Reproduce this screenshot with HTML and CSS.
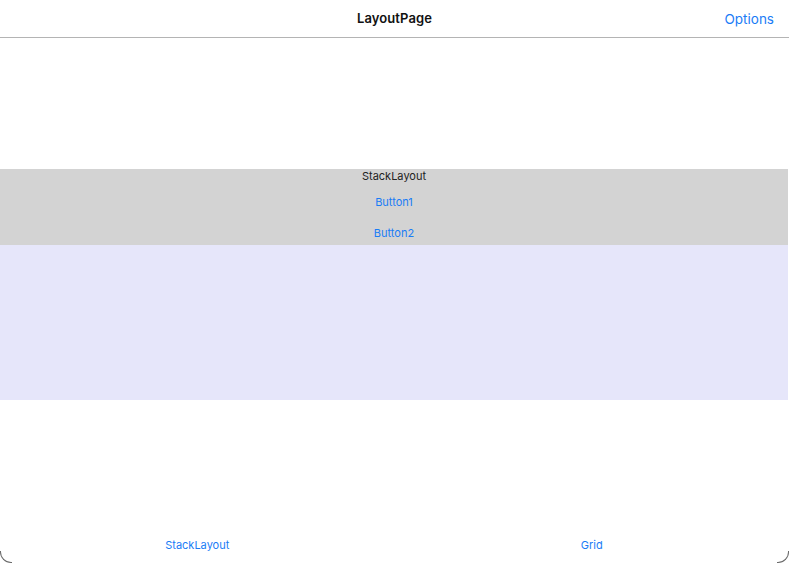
FILE: index.html
```html
<!DOCTYPE html>
<html>
<head>
<meta charset="utf-8">
<link rel="stylesheet" href="styles.css">
</head>
<body>
<div class="app">
  <header class="navbar">
    <div class="nav-title">LayoutPage</div>
    <div class="nav-action">Options</div>
  </header>
  <main class="content">
    <div class="spacer-top"></div>
    <section class="stack">
      <div class="stack-label">StackLayout</div>
      <div class="stack-btn">Button1</div>
      <div class="stack-btn">Button2</div>
    </section>
    <section class="lavender"></section>
  </main>
  <nav class="tabbar">
    <div class="tab">StackLayout</div>
    <div class="tab">Grid</div>
  </nav>
  <div class="corner corner-left"></div>
  <div class="corner corner-right"></div>
</div>
</body>
</html>
```

FILE: styles.css
```css
html, body {
  margin: 0;
  padding: 0;
  background: #ffffff;
}
body {
  font-family: Inter, "Liberation Sans", Arial, sans-serif;
}
.app {
  position: relative;
  width: 789px;
  height: 563px;
  display: flex;
  flex-direction: column;
  overflow: hidden;
}
.navbar {
  height: 37px;
  border-bottom: 1px solid #b4b4b4;
  display: flex;
  align-items: center;
  justify-content: center;
  position: relative;
  flex: none;
}
.nav-title {
  font-size: 13px;
  font-weight: 600;
  color: #111;
  letter-spacing: 0.1px;
  margin-top: -2px;
}
.nav-action {
  position: absolute;
  right: 15px;
  top: 0;
  height: 37px;
  display: flex;
  align-items: center;
  font-size: 13.5px;
  color: #1a7cf6;
}
.content {
  flex: 1;
  display: flex;
  flex-direction: column;
}
.spacer-top {
  height: 131px;
}
.stack {
  width: 788px;
  height: 76px;
  background: #d3d3d3;
  display: flex;
  flex-direction: column;
  align-items: center;
  gap: 6px;
}
.stack-label {
  height: 14px;
  line-height: 14px;
  font-size: 11px;
  color: #222;
}
.stack-btn {
  height: 25px;
  line-height: 27px;
  font-size: 11px;
  color: #1a7cf6;
}
.lavender {
  width: 788px;
  height: 155px;
  background: #e6e6fa;
}
.tabbar {
  height: 36px;
  display: grid;
  grid-template-columns: 1fr 1fr;
  align-items: center;
  padding-bottom: 1px;
  box-sizing: border-box;
}
.tab {
  text-align: center;
  font-size: 11px;
  color: #1a7cf6;
}
.corner {
  position: absolute;
  bottom: 0;
  width: 11px;
  height: 11px;
  border-bottom: 1px solid #6a6a6a;
}
.corner-left {
  left: 0;
  border-left: 1px solid #6a6a6a;
  border-bottom-left-radius: 11px;
}
.corner-right {
  right: 0;
  border-right: 1px solid #6a6a6a;
  border-bottom-right-radius: 11px;
}
```
